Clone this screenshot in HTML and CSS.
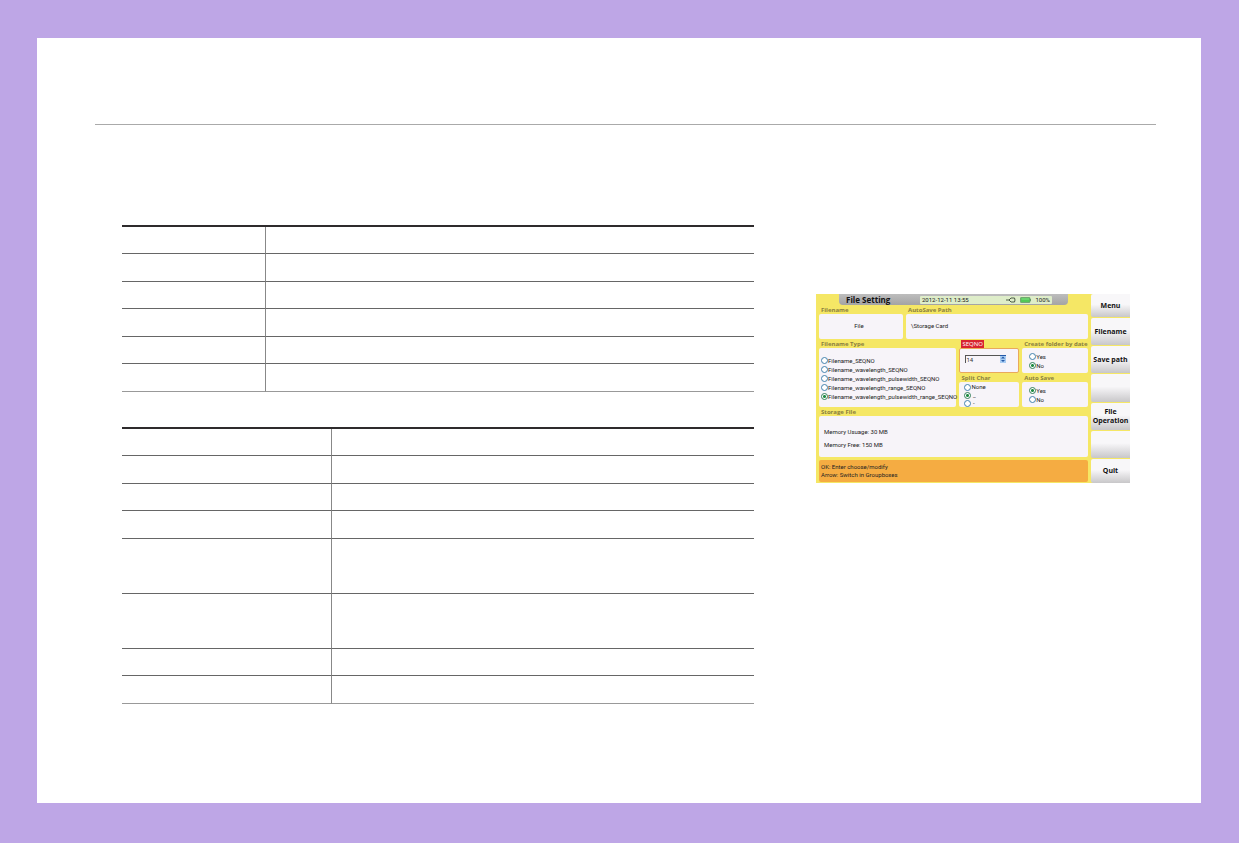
FILE: index.html
```html
<!DOCTYPE html>
<html lang="en">
<head>
<meta charset="utf-8">
<title>File Setting</title>
<link rel="stylesheet" href="styles.css">
</head>
<body>
<main class="sheet">
  <header class="sheet-head"></header>
  <div class="content">
    <div class="tables">
      <table class="grid-table narrow">
        <tr><td></td><td></td></tr>
        <tr><td></td><td></td></tr>
        <tr><td></td><td></td></tr>
        <tr><td></td><td></td></tr>
        <tr><td></td><td></td></tr>
        <tr><td></td><td></td></tr>
      </table>
      <table class="grid-table wide">
        <tr><td></td><td></td></tr>
        <tr><td></td><td></td></tr>
        <tr><td></td><td></td></tr>
        <tr><td></td><td></td></tr>
        <tr class="tall"><td></td><td></td></tr>
        <tr class="tall"><td></td><td></td></tr>
        <tr><td></td><td></td></tr>
        <tr><td></td><td></td></tr>
      </table>
    </div>
    <div class="device">
      <form class="screen">
        <div class="titlebar">
          <h1 class="title">File Setting</h1>
          <div class="status">
            <span class="clock">2012-12-11 13:55</span>
            <svg class="plug" viewBox="0 0 10 6" aria-hidden="true"><path d="M0 3h3M8.500 1H5L3 3l2 2h3.500M8.500 1L9 3l-.5 2" fill="none" stroke="#4b5a45" stroke-width="1"/></svg>
            <svg class="battery" viewBox="0 0 11 6" aria-hidden="true"><rect x=".5" y=".5" width="9.500" height="5" rx=".6" fill="#52c857" stroke="#6a9a68" stroke-width=".8"/><path d="M10.500 2v2" stroke="#6a9a68"/><path d="M1.500 2h7.500" stroke="#8fe38f" stroke-width=".8"/></svg>
            <span>100%</span>
          </div>
        </div>
        <div class="row row-path">
          <section class="group"><h2 class="legend">Filename</h2><div class="panel center">File</div></section>
          <section class="group"><h2 class="legend">AutoSave Path</h2><div class="panel path">\Storage Card</div></section>
        </div>
        <div class="row row-options">
          <section class="group type">
            <h2 class="legend">Filename Type</h2>
            <div class="panel choices type-choices">
              <label><input type="radio" name="type">Filename_SEQNO</label>
              <label><input type="radio" name="type">Filename_wavelength_SEQNO</label>
              <label><input type="radio" name="type">Filename_wavelength_pulsewidth_SEQNO</label>
              <label><input type="radio" name="type">Filename_wavelength_range_SEQNO</label>
              <label><input type="radio" name="type" checked>Filename_wavelength_pulsewidth_range_SEQNO</label>
            </div>
          </section>
          <section class="group">
            <h2 class="legend"><label class="active" for="seq">SEQNO</label></h2>
            <div class="panel focused">
              <div class="spin">
                <input id="seq" class="seq" type="text" value="14">
                <svg class="arrows" viewBox="0 0 6 8" aria-hidden="true"><path fill="#a9cdf3" d="M0 0h6v8H0z"/><path d="M0 0h6v1H0zM1 3.500l2-2 2 2zM1 5l2 2 2-2z" fill="#2459a8"/></svg>
              </div>
            </div>
          </section>
          <section class="group">
            <h2 class="legend">Create folder by date</h2>
            <div class="panel choices">
              <label><input type="radio" name="folder">Yes</label>
              <label><input type="radio" name="folder" checked>No</label>
            </div>
          </section>
          <section class="group">
            <h2 class="legend">Split Char</h2>
            <div class="panel choices split">
              <label><input type="radio" name="split">None</label>
              <label><input type="radio" name="split" checked>&nbsp;_</label>
              <label><input type="radio" name="split">&nbsp;-</label>
            </div>
          </section>
          <section class="group">
            <h2 class="legend">Auto Save</h2>
            <div class="panel choices auto">
              <label><input type="radio" name="auto" checked>Yes</label>
              <label><input type="radio" name="auto">No</label>
            </div>
          </section>
        </div>
        <section class="group storage">
          <h2 class="legend">Storage File</h2>
          <div class="panel memory"><p>Memory Usuage: 30 MB</p><p>Memory Free: 150 MB</p></div>
        </section>
        <footer class="hint"><p>OK: Enter choose/modify</p><p>Arrow: Switch in Groupboxes</p></footer>
      </form>
      <nav class="keys" aria-label="Menu">
        <button type="button">Menu</button>
        <button type="button">Filename</button>
        <button type="button">Save path</button>
        <button type="button"></button>
        <button type="button">File<br>Operation</button>
        <button type="button"></button>
        <button type="button">Quit</button>
      </nav>
    </div>
  </div>
</main>
</body>
</html>
```
FILE: styles.css
```css
* { box-sizing: border-box; }

body {
  display: flex;
  min-height: 100vh;
  margin: 0;
  padding: 38px 38px 40px 37px;
  background: #bea6e6;
  font-family: Roboto, "Open Sans", sans-serif;
}

h1, h2, p { margin: 0; }

.sheet {
  flex: 1;
  padding: 0 45px 0 58px;
  background: #fff;
}

.sheet-head {
  height: 87px;
  border-bottom: 1px solid #aaa;
}

.content {
  display: grid;
  grid-template-columns: minmax(0, 632fr) minmax(0, 314fr);
  column-gap: 62px;
  align-items: start;
  padding: 100px 26px 0 27px;
}

.tables {
  display: grid;
  row-gap: 35px;
}

.grid-table {
  width: 100%;
  table-layout: fixed;
  border-spacing: 0;
  border-top: 2px solid #2e2b2c;
}

.grid-table td {
  height: 27px;
  padding: 0;
  border-bottom: 1px solid #666;
}

.grid-table tr:nth-child(even) td { height: 28px; }
.grid-table tr.tall td { height: 55px; }
.grid-table tr:last-child td { border-bottom-color: #999; }
.grid-table td:first-child { border-right: 1px solid #888; }
.narrow td:first-child { width: 144px; }
.wide td:first-child { width: 210px; }

.device {
  display: grid;
  grid-template-columns: minmax(0, 1fr) 39px;
  margin-top: 69px;
  background: #f5e765;
  color: #222;
  font-size: 6px;
  line-height: 9px;
  white-space: nowrap;
}

.screen {
  display: flex;
  flex-direction: column;
  padding: 0 3px 1px 3px;
}

.titlebar {
  display: flex;
  align-items: center;
  justify-content: space-between;
  height: 11px;
  margin: 0 20px;
  padding: 0 16px 0 7px;
  border-radius: 0 0 4px 4px;
  background: linear-gradient(#bdbdbd, #a4a4a4);
}

.title {
  color: #111;
  font: 700 8px/11px "Open Sans", "Noto Sans", sans-serif;
}

.status {
  display: flex;
  align-items: center;
  gap: 4px;
  width: 132px;
  height: 8px;
  padding: 0 2px;
  border-radius: 1px;
  background: #deedc9;
}

.clock { flex: 1; }
.plug { width: 10px; height: 6px; }
.battery { width: 11px; height: 6px; }

.row {
  display: grid;
  column-gap: 3px;
}

.row-path { grid-template-columns: 84fr 182fr; }
.row-options { grid-template-columns: 138fr 60fr 66fr; }
.type { grid-row: span 2; }

.group {
  display: flex;
  flex-direction: column;
  min-width: 0;
}

.legend {
  height: 9px;
  padding-left: 2px;
  color: #8a8040;
  font: 700 6px/10px "Open Sans", "Noto Sans", sans-serif;
}

.active {
  display: inline-block;
  height: 8px;
  padding: 0 1px;
  background: #d8232f;
  color: #fff;
  font-weight: 400;
  line-height: 8px;
}

.panel {
  flex: 1;
  min-height: 25px;
  border-radius: 2px;
  background: #f7f4f9;
}

.center { padding-right: 4px; line-height: 24px; text-align: center; }
.path { padding-left: 5px; line-height: 24px; }
.focused { padding: 6px 12px 0 5px; border: 1px solid #e9a95c; }

.choices {
  display: flex;
  flex-direction: column;
  justify-content: center;
  padding: 1px 0 0 7px;
}

.choices label {
  display: flex;
  align-items: center;
}

.type-choices { padding: 1px 0 0 2px; }
.split { padding-left: 5px; }
.split label { line-height: 8px; }

.choices input {
  flex: none;
  width: 7px;
  height: 7px;
  margin: 0;
  border: 1px solid #4483ae;
  border-radius: 50%;
  background: #fff;
  appearance: none;
}

.choices input:checked {
  border-color: #35805b;
  background: radial-gradient(circle, #1f8b42 1px, #fff 2px);
}

.spin { display: flex; }

.seq {
  flex: 1;
  min-width: 0;
  height: 8px;
  padding: 0;
  border: 0;
  border-top: 1px solid #555;
  border-left: 1px solid #555;
  background: transparent;
  color: #333;
  font: inherit;
}

.arrows { width: 6px; height: 8px; }

.storage .panel { min-height: 41px; }
.memory { padding: 9px 5px 0; }
.memory p { line-height: 13px; }

.hint {
  margin-top: 3px;
  padding: 3px 2px;
  border-radius: 2px;
  background: #f5ac42;
  line-height: 8px;
}

.keys {
  display: grid;
  grid-template-rows: 24fr 28fr 28fr 28fr 28fr 28fr 25fr;
  row-gap: 1px;
}

.keys button {
  min-width: 0;
  padding: 0;
  border: 0;
  border-radius: 2px 0 0 2px;
  background: linear-gradient(#f8f7f9 45%, #c8c7c9);
  color: #111;
  font: 700 7px/9px "Open Sans", "Noto Sans", sans-serif;
}
```
